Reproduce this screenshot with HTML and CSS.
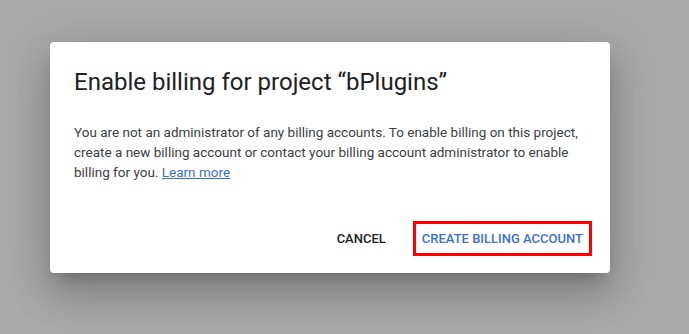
FILE: index.html
```
<!DOCTYPE html>
<html lang="en">
  <head>
    <meta charset="UTF-8">
    <meta name="viewport" content="width=device-width, initial-scale=1.0">
    <title>Enable billing</title>
    <link rel="stylesheet" href="styles.css">
  </head>
  <body>
    <div class="dialog">
        <p class="dialog-title">Enable billing for project “bPlugins”</p>

        <p class="dialog-text">
            You are not an administrator of any billing accounts. To enable billing on this project,
            create a new billing account or contact your billing account administrator to enable
            billing for you. <a href="#" class="learn-link">Learn more</a>
        </p>

        <div class="dialog-actions">
            <button class="action-button cancel-button">Cancel</button>
            <button class="action-button create-button">Create billing account</button>
        </div>
    </div>
  </body>
</html>
```

FILE: styles.css
```
body{
    margin: 0;
    width: 689px;
    height: 334px;
    background-color: #aaaaaa;
    font-family: Roboto, "Liberation Sans", Arial, sans-serif;
    overflow: hidden;
}

.dialog{
    background-color: white;
    width: 560px;
    height: 231px;
    box-sizing: border-box;
    margin-left: 50px;
    margin-top: 42px;
    padding: 24px 18px 0 24px;
    border-radius: 4px;
    box-shadow: 0 11px 15px -7px rgba(0, 0, 0, 0.2), 0 24px 38px 3px rgba(0, 0, 0, 0.14), 0 9px 46px 8px rgba(0, 0, 0, 0.12);
}

.dialog-title{
    margin: 0;
    font-size: 24px;
    line-height: 32px;
    color: #202124;
}

.dialog-text{
    margin: 24px 0 0 0;
    font-size: 13.5px;
    line-height: 20px;
    color: #3c4043;
}

.learn-link{
    color: #3c6fd6;
    text-decoration: underline;
}

.dialog-actions{
    display: flex;
    justify-content: flex-end;
    align-items: center;
    margin-top: 39px;
}

.action-button{
    background-color: transparent;
    border: none;
    font-family: inherit;
    font-size: 13px;
    font-weight: 500;
    text-transform: uppercase;
    height: 35px;
    padding: 0 8px;
    cursor: pointer;
}

.cancel-button{
    color: #202124;
    margin-right: 19px;
}

.create-button{
    color: #3c6fd6;
    border: 3px solid red;
    padding: 0 6px;
}
```
